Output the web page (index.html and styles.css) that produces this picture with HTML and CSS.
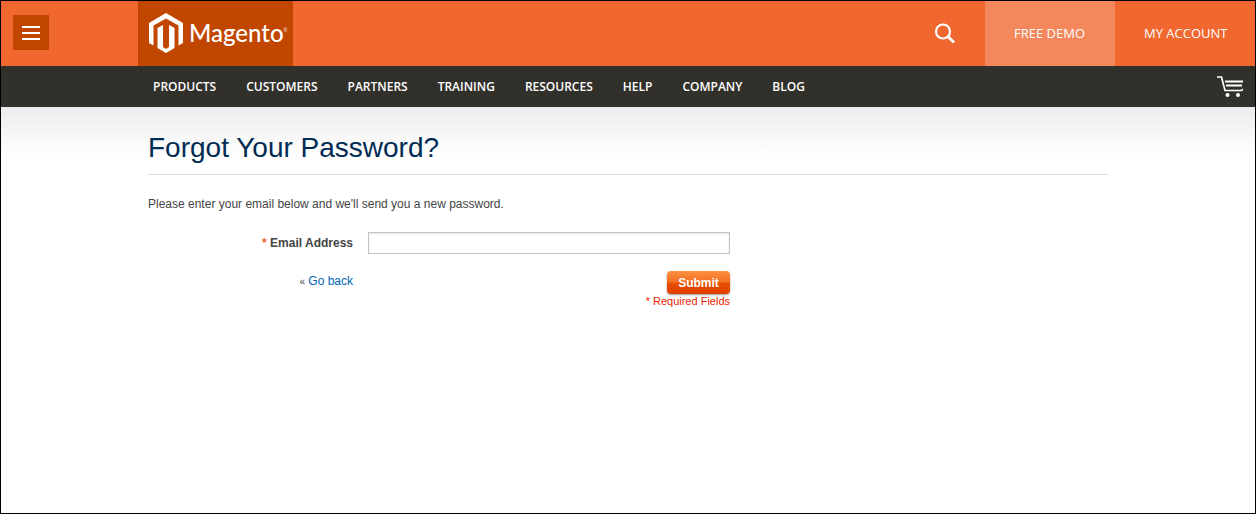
FILE: index.html
```html
<!DOCTYPE html>
<html lang="en">
<head>
<meta charset="utf-8">
<title>Forgot Your Password?</title>
<link rel="stylesheet" href="styles.css">
</head>
<body>
<header class="top">
  <div class="side">
    <button class="menu" type="button" aria-label="Menu">
      <svg width="18" height="14" viewBox="0 0 18 14"><path d="M0 1h18M0 7h18M0 13h18" stroke="#fff" stroke-width="2"/></svg>
    </button>
  </div>
  <a class="logo" href="#">
    <svg width="34" height="40" viewBox="0 0 34 40" fill="#fff"><path d="M17 0 34 10V30L29.500 32.500V12.500L17 5.500 4.500 12.500V32.500L0 30V10Z"/><path d="M8.500 15 14 12V34L17 36 20 34V12L25.500 15V35L17 40 8.500 35Z"/></svg>
    <span class="brand">Magento</span><span class="reg">®</span>
  </a>
  <div class="tools">
    <button class="search" type="button" aria-label="Search">
      <svg width="22" height="22" viewBox="0 0 22 22" fill="none" stroke="#fff"><circle cx="9" cy="8.500" r="7" stroke-width="2.200"/><path d="M14 13.500 20 19.500" stroke-width="3"/></svg>
    </button>
    <a class="tool demo" href="#">FREE DEMO</a>
    <a class="tool" href="#">MY ACCOUNT</a>
  </div>
</header>
<nav class="nav">
  <div class="links">
    <a href="#">PRODUCTS</a><a href="#">CUSTOMERS</a><a href="#">PARTNERS</a><a href="#">TRAINING</a><a href="#">RESOURCES</a><a href="#">HELP</a><a href="#">COMPANY</a><a href="#">BLOG</a>
  </div>
  <a class="cart" href="#" aria-label="Cart">
    <svg width="26" height="22" viewBox="0 0 26 22" fill="none" stroke="#fff"><path d="M0 1H4.500L8 14.500H24.500L26 13" stroke-width="1.700"/><path d="M8 5.500H26M9 9.500H25" stroke-width="1.800"/><g fill="#fff" stroke="none"><circle cx="10.500" cy="19" r="2"/><circle cx="21" cy="19" r="2"/></g></svg>
  </a>
</nav>
<main class="page">
  <div class="content">
    <h1>Forgot Your Password?</h1>
    <p class="intro">Please enter your email below and we'll send you a new password.</p>
    <form class="form">
      <label for="email"><span class="star">*</span> Email Address</label>
      <input id="email" type="email">
      <p class="back"><small>«</small> <a href="#">Go back</a></p>
      <div class="actions">
        <button class="submit" type="submit">Submit</button>
        <p class="required">* Required Fields</p>
      </div>
    </form>
  </div>
</main>
</body>
</html>
```
FILE: styles.css
```css
* { box-sizing: border-box; }
body {
  margin: 0;
  min-height: 100vh;
  border: 1px solid #000;
  display: flex;
  flex-direction: column;
  font: 12px/16px "Liberation Sans", Arial, sans-serif;
  color: #444;
  background: #fff;
}
a { text-decoration: none; }
p, h1 { margin: 0; }
button { border: 0; padding: 0; cursor: pointer; }
svg { display: block; flex: none; }

.top {
  display: flex;
  height: 65px;
  background: #f0672f;
}
.side {
  width: calc(50% - 490px);
  padding: 14px 12px;
}
.menu {
  display: grid;
  place-items: center;
  width: 36px;
  height: 35px;
  background: #c14700;
}
.logo {
  display: flex;
  align-items: center;
  width: 155px;
  padding: 0 0 2px 11px;
  background: #c14700;
  color: #fff;
}
.brand {
  margin-left: 6px;
  font: 500 24px/32px Lato, sans-serif;
}
.reg {
  padding-bottom: 6px;
  font-size: 5px;
  line-height: 8px;
}
.tools {
  display: flex;
  margin-left: auto;
  font: 13px/65px "Open Sans", sans-serif;
}
.search {
  display: grid;
  place-items: center;
  width: 80px;
  background: none;
}
.tool {
  width: 140px;
  padding-left: 29px;
  color: #fff;
}
.demo {
  width: 130px;
  background: #f4875c;
}

.nav {
  display: flex;
  justify-content: space-between;
  align-items: center;
  height: 41px;
  padding: 0 12px 0 calc(50% - 475px);
  background: #32302b;
}
.links {
  display: flex;
  gap: 30px;
  font: 600 12px/41px "Open Sans", sans-serif;
}
.links a { color: #fff; }

.page {
  flex: 1;
  padding: 23px 20px;
  background: linear-gradient(#ececec, #fff 50px);
}
.content {
  max-width: 960px;
  margin: 0 auto;
}
h1 {
  padding-bottom: 8px;
  border-bottom: 1px solid #ddd;
  font-size: 28px;
  line-height: 36px;
  font-weight: 400;
  color: #002c54;
}
.intro { padding: 21px 0 20px; }
.form {
  display: grid;
  grid-template-columns: 205px 362px;
  column-gap: 15px;
  row-gap: 17px;
}
.form label {
  line-height: 22px;
  font-weight: 700;
  text-align: right;
}
.star { color: #f26731; }
.form input {
  width: 100%;
  height: 22px;
  padding: 0 4px;
  border: 1px solid #c3c3c3;
  box-shadow: inset 0 1px 2px #e4e4e4;
  font: inherit;
}
.back {
  line-height: 20px;
  text-align: right;
}
.back small { font-size: 10px; }
.back a { color: #0066b3; }
.actions {
  display: flex;
  flex-direction: column;
  align-items: flex-end;
}
.submit {
  width: 63px;
  height: 23px;
  border-radius: 4px;
  background: linear-gradient(#fd903f, #f36f24 48%, #e85000 52%, #dd3d00);
  box-shadow: 0 1px 2px #999;
  color: #fff;
  font: 700 12px/22px "Liberation Sans", Arial, sans-serif;
}
.required {
  font-size: 11px;
  line-height: 15px;
  color: #eb1c00;
}
```
